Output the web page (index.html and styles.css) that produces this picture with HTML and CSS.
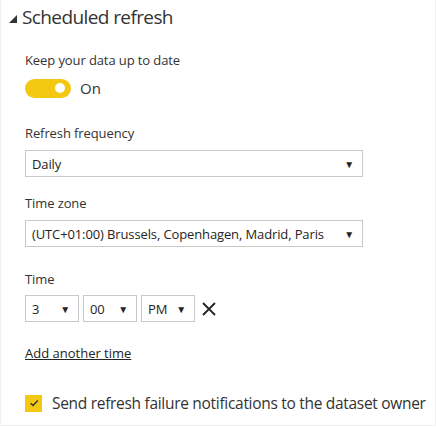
FILE: index.html
```html
<!DOCTYPE html>
<html>
<head>
<meta charset="utf-8">
<link rel="stylesheet" href="styles.css">
</head>
<body>
<div class="panel">
  <div class="header">
    <svg class="caret" width="8" height="8" viewBox="0 0 8 8"><polygon points="8,0 8,8 0,8" fill="#333"/></svg>
    <span class="title">Scheduled refresh</span>
  </div>
  <div class="content">
    <div class="label">Keep your data up to date</div>
    <div class="toggle-row">
      <span class="toggle"><span class="knob"></span></span>
      <span class="toggle-text">On</span>
    </div>

    <div class="label gap-lg">Refresh frequency</div>
    <div class="select wide"><span>Daily</span><span class="arrow">▼</span></div>

    <div class="label gap-md">Time zone</div>
    <div class="select wide"><span>(UTC+01:00) Brussels, Copenhagen, Madrid, Paris</span><span class="arrow">▼</span></div>

    <div class="label gap-time">Time</div>
    <div class="time-row">
      <div class="select small"><span>3</span><span class="arrow">▼</span></div>
      <div class="select small"><span>00</span><span class="arrow">▼</span></div>
      <div class="select small"><span>PM</span><span class="arrow">▼</span></div>
      <svg class="remove" width="16" height="16" viewBox="0 0 16 16"><path d="M2 2 L14 14 M14 2 L2 14" stroke="#252423" stroke-width="1.8" fill="none"/></svg>
    </div>

    <a class="add-link">Add another time</a>

    <div class="check-row">
      <span class="checkbox"><svg width="12" height="12" viewBox="0 0 12 12"><path d="M2.5 6.2 L5 8.6 L9.8 3.6" stroke="#333" stroke-width="1.4" fill="none"/></svg></span>
      <span class="check-text">Send refresh failure notifications to the dataset owner</span>
    </div>
  </div>
</div>
</body>
</html>
```

FILE: styles.css
```css
html, body {
  margin: 0;
  padding: 0;
  background: #fff;
}
body {
  font-family: "Open Sans", "Noto Sans", sans-serif;
  color: #333;
}
.panel {
  width: 434px;
  height: 425px;
  border: 1px solid #f0f0f0;
  border-top: none;
  box-sizing: content-box;
  overflow: hidden;
}
.header {
  display: flex;
  align-items: center;
  height: 34px;
  padding-left: 8px;
}
.caret {
  margin-right: 5px;
  margin-top: 3px;
}
.title {
  font-size: 19px;
  color: #333;
  letter-spacing: -0.6px;
}
.content {
  padding-left: 24px;
  display: flex;
  flex-direction: column;
  align-items: flex-start;
}
.label {
  font-size: 13px;
  margin-top: 17px;
  line-height: 18px;
  color: #333;
  letter-spacing: -0.1px;
}
.gap-lg { margin-top: 26px; }
.gap-md { margin-top: 17px; }
.gap-time { margin-top: 23px; }
.toggle-row {
  display: flex;
  align-items: center;
  margin-top: 9px;
}
.toggle {
  width: 46px;
  height: 19px;
  border-radius: 10px;
  background: #f2c811;
  display: flex;
  align-items: center;
  justify-content: flex-end;
  box-sizing: border-box;
  padding-right: 6px;
}
.knob {
  width: 10px;
  height: 10px;
  border-radius: 50%;
  background: #fff;
}
.toggle-text {
  font-size: 15px;
  margin-left: 9px;
}
.select {
  display: flex;
  align-items: center;
  justify-content: space-between;
  border: 1px solid #c8c8c8;
  box-sizing: border-box;
  height: 27px;
  padding: 0 8px 0 6px;
  font-size: 13px;
  letter-spacing: -0.12px;
  color: #252423;
  margin-top: 8px;
  background: #fff;
}
.wide { width: 338px; }
.small { width: 54px; margin-top: 0; }
.arrow {
  font-size: 10px;
  color: #252423;
}
.time-row {
  display: flex;
  align-items: center;
  gap: 4px;
  margin-top: 7px;
}
.remove {
  margin-left: 2px;
}
.add-link {
  font-size: 13px;
  text-decoration: underline;
  margin-top: 22px;
  color: #252423;
}
.check-row {
  display: flex;
  align-items: center;
  margin-top: 30px;
}
.checkbox {
  width: 17px;
  height: 17px;
  background: #f2c811;
  display: flex;
  align-items: center;
  justify-content: center;
}
.check-text {
  font-size: 15.5px;
  letter-spacing: -0.3px;
  white-space: nowrap;
  margin-left: 10px;
  color: #333;
}
```
